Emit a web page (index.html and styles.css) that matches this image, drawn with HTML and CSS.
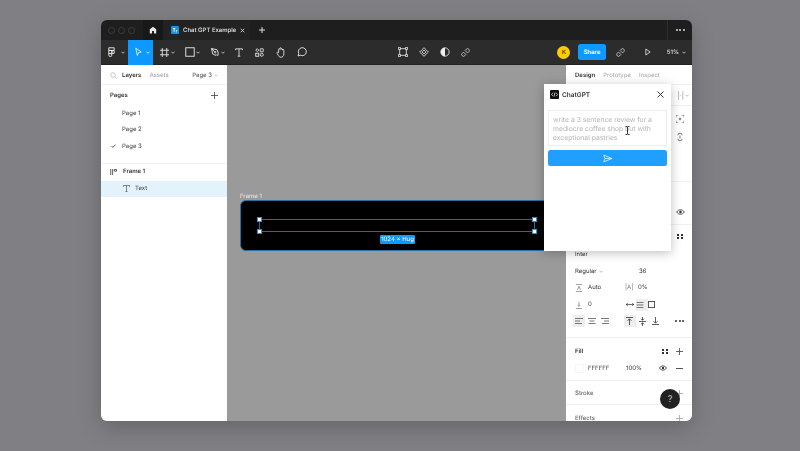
FILE: index.html
```html
<!DOCTYPE html>
<html lang="en">
<head>
    <meta charset="UTF-8">
    <meta name="viewport" content="width=device-width, initial-scale=1.0">
    <title>Chat GPT Example</title>
    <link rel="stylesheet" href="styles.css">
</head>
<body>
<div class="window">
    <div class="titlebar">
        <div class="traffic"><i></i><i></i><i></i></div>
        <div class="home">
            <svg width="8" height="8" viewBox="0 0 10 10"><path d="M5 .8 9 4.2V9.4H6.2V6.4H3.8V9.4H1V4.2Z" fill="#e8e8e8"/></svg>
        </div>
        <div class="file-tab">
            <span class="file-icon">
                <svg width="8" height="8" viewBox="0 0 9 9"><path d="M2 2.2H5V3.2H4V6.5H3V3.2H2ZM5.5 4.5H7.2V5.2H6.2V7.2H5.5Z" fill="#fff"/></svg>
            </span>
            <span class="file-name">Chat GPT Example</span>
            <svg class="file-close" width="5" height="5" viewBox="0 0 7 7"><path d="M1 1 6 6M6 1 1 6" stroke="#ddd" stroke-width="1.2"/></svg>
        </div>
        <svg class="new-tab" width="6" height="6" viewBox="0 0 7 7"><path d="M3.5 0V7M0 3.5H7" stroke="#ddd" stroke-width="1.2"/></svg>
        <div class="title-more"><i></i><i></i><i></i></div>
    </div>

    <div class="toolbar">
        <div class="tool tool-menu">
            <svg width="7" height="10" viewBox="0 0 9 13" fill="none" stroke="#e8e8e8" stroke-width="1.2"><path d="M1 1H8V4.5H1ZM1 4.5H5V8.5H1ZM1 8.5H3A2 2 0 1 1 1 10.5ZM5 6.5A1.6 1.6 0 1 0 8 6.5 1.6 1.6 0 1 0 5 6.5Z"/></svg>
            <svg class="caret" width="4" height="3" viewBox="0 0 5 3"><path d="M.5.5 2.5 2.5 4.5.5" fill="none" stroke="#ddd"/></svg>
        </div>
        <div class="tool tool-active">
            <svg width="7" height="10" viewBox="0 0 9 12"><path d="M1 1 8 6 4.6 6.8 3 10.5Z" fill="none" stroke="#fff" stroke-width="1"/></svg>
            <svg class="caret" width="4" height="3" viewBox="0 0 5 3"><path d="M.5.5 2.5 2.5 4.5.5" fill="none" stroke="#fff"/></svg>
        </div>
        <div class="tool">
            <svg width="9" height="9" viewBox="0 0 12 12"><path d="M3 0V12M9 0V12M0 3H12M0 9H12" stroke="#e8e8e8" stroke-width="1.2"/></svg>
            <svg class="caret" width="4" height="3" viewBox="0 0 5 3"><path d="M.5.5 2.5 2.5 4.5.5" fill="none" stroke="#ddd"/></svg>
        </div>
        <div class="tool">
            <svg width="10" height="10" viewBox="0 0 13 13"><rect x="1" y="1" width="11" height="11" fill="none" stroke="#e8e8e8" stroke-width="1.2"/></svg>
            <svg class="caret" width="4" height="3" viewBox="0 0 5 3"><path d="M.5.5 2.5 2.5 4.5.5" fill="none" stroke="#ddd"/></svg>
        </div>
        <div class="tool">
            <svg width="10" height="10" viewBox="0 0 13 13" fill="none" stroke="#e8e8e8" stroke-width="1.2"><path d="M2 2 9 3.5 11 8 8 11 3.5 9Z"/><path d="M2 2 6 6"/><circle cx="6.8" cy="6.8" r="1"/><path d="M9.5 11.5 11.5 9.5"/></svg>
            <svg class="caret" width="4" height="3" viewBox="0 0 5 3"><path d="M.5.5 2.5 2.5 4.5.5" fill="none" stroke="#ddd"/></svg>
        </div>
        <div class="tool tool-plain">
            <svg width="8" height="9" viewBox="0 0 12 13" fill="none" stroke="#e8e8e8" stroke-width="1.3"><path d="M1 3V1H11V3M6 1V12M4 12H8"/></svg>
        </div>
        <div class="tool tool-plain">
            <svg width="9" height="9" viewBox="0 0 12 12" fill="none" stroke="#e8e8e8" stroke-width="1.2"><path d="M3 .8 5 2.8 3 4.8 1 2.8Z"/><circle cx="9" cy="9" r="2"/><rect x="1" y="7" width="4" height="4"/><rect x="7" y="1" width="4" height="4" rx=".5"/></svg>
        </div>
        <div class="tool tool-plain">
            <svg width="10" height="11" viewBox="0 0 12 14" fill="none" stroke="#e8e8e8" stroke-width="1.1"><path d="M3 7V3A.8.8 0 0 1 4.6 3V1.8A.8.8 0 0 1 6.2 1.8V3A.8.8 0 0 1 7.8 3V4A.8.8 0 0 1 9.6 4V9C9.6 11.5 8 13 6 13S3.5 12.2 2.5 10.5L1 8A.9.9 0 0 1 2.5 7L3 7.6"/></svg>
        </div>
        <div class="tool tool-plain">
            <svg width="10" height="10" viewBox="0 0 12 12"><path d="M1.2 10.8 2.2 8A4.8 4.8 0 1 1 4 9.8Z" fill="none" stroke="#e8e8e8" stroke-width="1.1"/></svg>
        </div>

        <div class="toolbar-center">
            <svg width="10" height="10" viewBox="0 0 12 12" fill="none" stroke="#e8e8e8"><path d="M2 2H10V10H2Z"/><path d="M.5.5H3V3H.5ZM9 .5H11.5V3H9ZM.5 9H3V11.5H.5ZM9 9H11.5V11.5H9Z" fill="#2c2c2c"/></svg>
            <svg width="10" height="10" viewBox="0 0 12 12" fill="none" stroke="#e8e8e8"><path d="M6 .8 8 2.8 6 4.8 4 2.8ZM6 7.2 8 9.2 6 11.2 4 9.2ZM.8 6 2.8 4 4.8 6 2.8 8ZM7.2 6 9.2 4 11.2 6 9.2 8Z"/></svg>
            <svg width="10" height="10" viewBox="0 0 12 12"><circle cx="6" cy="6" r="5" fill="none" stroke="#eee"/><path d="M6 1A5 5 0 0 0 6 11Z" fill="#eee"/></svg>
            <svg width="9" height="9" viewBox="0 0 11 11" fill="none" stroke="#d8d8d8"><path d="M6.5 1.5A2 2 0 0 1 9.5 4.5L8 6 5 3ZM4.5 9.5A2 2 0 0 1 1.5 6.5L3 5 6 8Z"/></svg>
        </div>

        <div class="toolbar-right">
            <span class="avatar">K</span>
            <span class="share">Share</span>
            <svg class="link-icon" width="9" height="9" viewBox="0 0 11 11" fill="none" stroke="#d8d8d8"><path d="M6.5 1.5A2 2 0 0 1 9.5 4.5L8 6 5 3ZM4.5 9.5A2 2 0 0 1 1.5 6.5L3 5 6 8Z"/></svg>
            <svg class="play-icon" width="6" height="8" viewBox="0 0 7 9"><path d="M1 1 6 4.5 1 8Z" fill="none" stroke="#e0e0e0"/></svg>
            <span class="zoom-level">51%</span>
            <svg width="4" height="3" viewBox="0 0 5 3"><path d="M.5.5 2.5 2.5 4.5.5" fill="none" stroke="#ddd"/></svg>
        </div>
    </div>

    <div class="workspace">
        <aside class="left-panel">
            <div class="panel-tabs">
                <svg width="7" height="7" viewBox="0 0 7 7" fill="none" stroke="#bbb" stroke-width=".8"><circle cx="3" cy="3" r="2.3"/><path d="M4.8 4.8 6.8 6.8"/></svg>
                <span class="tab-on">Layers</span>
                <span class="tab-off">Assets</span>
                <span class="page-pick">Page 3</span>
                <svg width="4" height="3" viewBox="0 0 5 3"><path d="M.5 2.5 2.5.5 4.5 2.5" fill="none" stroke="#bbb"/></svg>
            </div>
            <div class="pages">
                <div class="pages-head">
                    <span>Pages</span>
                    <svg width="7" height="7" viewBox="0 0 7 7"><path d="M3.5 0V7M0 3.5H7" stroke="#555" stroke-width=".9"/></svg>
                </div>
                <div class="page-row">Page 1</div>
                <div class="page-row">Page 2</div>
                <div class="page-row">
                    <svg class="check" width="5" height="4" viewBox="0 0 6 5"><path d="M.5 2.5 2.2 4.2 5.5.8" fill="none" stroke="#333"/></svg>
                    Page 3
                </div>
            </div>
            <div class="layer-row layer-frame">
                <svg width="7" height="6" viewBox="0 0 8 7"><path d="M.8 0V7M3 0V7M5 .5H7.5V2.5H5Z" fill="none" stroke="#444"/></svg>
                <span>Frame 1</span>
            </div>
            <div class="layer-row layer-text">
                <svg width="7" height="7" viewBox="0 0 8 8"><path d="M.5 2V.5H7.5V2M4 .5V7.5M2.8 7.5H5.2" fill="none" stroke="#555" stroke-width=".8"/></svg>
                <span>Text</span>
            </div>
        </aside>

        <main class="canvas">
            <div class="frame-label">Frame 1</div>
            <div class="frame">
                <div class="text-box">
                    <i class="handle handle-tl"></i><i class="handle handle-tr"></i>
                    <i class="handle handle-bl"></i><i class="handle handle-br"></i>
                    <span class="size-tag">1024 × Hug</span>
                </div>
            </div>
        </main>

        <aside class="right-panel">
            <div class="panel-tabs design-tabs">
                <span class="tab-on">Design</span>
                <span class="tab-off">Prototype</span>
                <span class="tab-off">Inspect</span>
            </div>
            <div class="section section-align">
                <span class="mini-icons">|·|</span>
                <svg width="4" height="3" viewBox="0 0 5 3"><path d="M.5.5 2.5 2.5 4.5.5" fill="none" stroke="#aaa"/></svg>
            </div>
            <div class="section section-icons">
                <svg width="8" height="8" viewBox="0 0 9 9" fill="none" stroke="#555" stroke-width=".9"><path d="M0 2.5V0H2.5M6.5 0H9V2.5M9 6.5V9H6.5M2.5 9H0V6.5"/><circle cx="4.5" cy="4.5" r="1"/></svg>
                <svg width="6" height="10" viewBox="0 0 7 11" fill="none" stroke="#555" stroke-width=".9"><path d="M1 3.5A2.5 2.5 0 0 1 6 3.5M1 7.5A2.5 2.5 0 0 0 6 7.5M3.5 4V7"/></svg>
            </div>
            <div class="section section-hidden">
                <svg width="9" height="6" viewBox="0 0 10 7"><path d="M.5 3.5C3 0 7 0 9.5 3.5 7 7 3 7 .5 3.5Z" fill="none" stroke="#333"/><circle cx="5" cy="3.5" r="1.5" fill="#333"/></svg>
            </div>
            <div class="section section-type">
                <div class="row row-dots"><span class="dots-four"><i></i><i></i><i></i><i></i></span></div>
                <div class="row">Inter</div>
                <div class="row row-regular">
                    <span class="weight">Regular</span>
                    <svg width="4" height="3" viewBox="0 0 5 3"><path d="M.5.5 2.5 2.5 4.5.5" fill="none" stroke="#aaa"/></svg>
                    <span class="font-size">36</span>
                </div>
                <div class="row row-metrics">
                    <svg width="8" height="8" viewBox="0 0 9 9" fill="none" stroke="#777" stroke-width=".8"><path d="M1 .5H8M1 8.5H8M2.8 6.5 4.5 2.5 6.2 6.5"/></svg>
                    <span class="metric-a">Auto</span>
                    <span class="glyph-box">|A|</span>
                    <span>0%</span>
                </div>
                <div class="row row-metrics">
                    <svg width="8" height="8" viewBox="0 0 9 9" fill="none" stroke="#777" stroke-width=".8"><path d="M1 8.5H8M4.5 1V6M3 4.5 4.5 6 6 4.5"/></svg>
                    <span class="metric-a">0</span>
                    <svg class="resize-h" width="8" height="5" viewBox="0 0 9 5" fill="none" stroke="#333" stroke-width=".8"><path d="M0 2.5H9M2 .8.4 2.5 2 4.2M7 .8 8.6 2.5 7 4.2"/></svg>
                    <span class="icon-btn icon-btn-on">
                        <svg width="8" height="6" viewBox="0 0 8 7"><path d="M0 .5H8M0 3.5H8M0 6.5H8" stroke="#333" stroke-width=".8"/></svg>
                    </span>
                    <span class="icon-btn">
                        <svg width="7" height="7" viewBox="0 0 8 8"><rect x=".5" y=".5" width="7" height="7" fill="none" stroke="#444"/></svg>
                    </span>
                </div>
                <div class="row row-align">
                    <span class="icon-btn icon-btn-on"><svg width="8" height="6" viewBox="0 0 8 6"><path d="M0 .5H8M0 3H5M0 5.5H7" stroke="#555" stroke-width=".8"/></svg></span>
                    <span class="icon-btn"><svg width="8" height="6" viewBox="0 0 8 6"><path d="M0 .5H8M1.5 3H6.5M.5 5.5H7.5" stroke="#555" stroke-width=".8"/></svg></span>
                    <span class="icon-btn"><svg width="8" height="6" viewBox="0 0 8 6"><path d="M0 .5H8M3 3H8M1 5.5H8" stroke="#555" stroke-width=".8"/></svg></span>
                    <span class="icon-gap"></span>
                    <span class="icon-btn icon-btn-on"><svg width="7" height="8" viewBox="0 0 7 8" fill="none" stroke="#333" stroke-width=".8"><path d="M0 .5H7M3.5 8V2M1.5 3.8 3.5 1.8 5.5 3.8"/></svg></span>
                    <span class="icon-btn"><svg width="7" height="9" viewBox="0 0 7 9" fill="none" stroke="#333" stroke-width=".8"><path d="M0 4.5H7M3.5 0V3M3.5 6V9M2 1.8 3.5 3.3 5 1.8M2 7.2 3.5 5.7 5 7.2"/></svg></span>
                    <span class="icon-btn"><svg width="7" height="8" viewBox="0 0 7 8" fill="none" stroke="#333" stroke-width=".8"><path d="M0 7.5H7M3.5 0V6M1.5 4.2 3.5 6.2 5.5 4.2"/></svg></span>
                    <span class="more-dots"><i></i><i></i><i></i></span>
                </div>
            </div>
            <div class="section section-fill">
                <div class="row row-head">
                    <b>Fill</b>
                    <span class="dots-four"><i></i><i></i><i></i><i></i></span>
                    <svg width="7" height="7" viewBox="0 0 7 7"><path d="M3.5 0V7M0 3.5H7" stroke="#555" stroke-width=".9"/></svg>
                </div>
                <div class="row row-color">
                    <span class="swatch"></span>
                    <span class="hex">FFFFFF</span>
                    <span class="opacity">100%</span>
                    <svg width="8" height="6" viewBox="0 0 10 7"><path d="M.5 3.5C3 0 7 0 9.5 3.5 7 7 3 7 .5 3.5Z" fill="none" stroke="#333"/><circle cx="5" cy="3.5" r="1.5" fill="#333"/></svg>
                    <svg width="7" height="1" viewBox="0 0 7 1"><path d="M0 .5H7" stroke="#555"/></svg>
                </div>
            </div>
            <div class="section section-plain">
                <span>Stroke</span>
                <svg width="7" height="7" viewBox="0 0 7 7"><path d="M3.5 0V7M0 3.5H7" stroke="#aaa" stroke-width=".9"/></svg>
            </div>
            <div class="section section-plain section-last">
                <span>Effects</span>
                <svg width="7" height="7" viewBox="0 0 7 7"><path d="M3.5 0V7M0 3.5H7" stroke="#aaa" stroke-width=".9"/></svg>
            </div>
        </aside>

        <div class="plugin">
            <div class="plugin-head">
                <span class="plugin-logo">
                    <svg width="7" height="5" viewBox="0 0 7 5" fill="none" stroke="#fff" stroke-width=".7"><path d="M2 .8 .5 2.5 2 4.2M5 .8 6.5 2.5 5 4.2M4 .5 3 4.5"/></svg>
                </span>
                <span class="plugin-title">ChatGPT</span>
                <svg width="7" height="7" viewBox="0 0 7 7"><path d="M.5.5 6.5 6.5M6.5.5 .5 6.5" stroke="#222" stroke-width=".9"/></svg>
            </div>
            <div class="prompt">write a 3 sentence review for a mediocre coffee shop but with exceptional pastries</div>
            <div class="send">
                <svg width="10" height="9" viewBox="0 0 11 9"><path d="M.8.8 10 4.5.8 8.2 2.2 4.5ZM2.2 4.5H10" fill="none" stroke="#dff1ff" stroke-width=".9"/></svg>
            </div>
            <svg class="ibeam" width="5" height="9" viewBox="0 0 5 9"><path d="M.5.5H2L2.5 1 3 .5H4.5M2.5 1V8M.5 8.5H2L2.5 8 3 8.5H4.5" fill="none" stroke="#222" stroke-width=".9"/></svg>
        </div>

        <div class="help">?</div>
    </div>
</div>
</body>
</html>
```

FILE: styles.css
```css
* {
    box-sizing: border-box;
}
html, body {
    height: 100%;
}
body {
    margin: 0;
    padding: 20px 108px 30px 101px;
    overflow: hidden;
    background: #808084;
    font-family: Inter, "Liberation Sans", sans-serif;
    font-size: 6px;
    text-rendering: geometricPrecision;
    color: #333;
}
svg {
    display: block;
    flex: none;
}
.window {
    height: 401px;
    display: flex;
    flex-direction: column;
    border-radius: 6px;
    overflow: hidden;
    box-shadow: 0 6px 22px rgba(0, 0, 0, .22);
    filter: blur(.25px);
}

/* title bar */
.titlebar {
    height: 20px;
    display: flex;
    align-items: center;
    background: #1e1e1e;
    color: #e6e6e6;
}
.traffic {
    width: 42px;
    display: flex;
    gap: 3px;
    padding-left: 7px;
}
.traffic i {
    width: 7px;
    height: 7px;
    border: 1px solid #3c3c3c;
    border-radius: 50%;
}
.home {
    width: 20px;
    height: 20px;
    display: flex;
    align-items: center;
    justify-content: center;
    background: #181818;
}
.file-tab {
    width: 87px;
    height: 20px;
    display: flex;
    align-items: center;
    padding-left: 8px;
    background: #222;
}
.file-icon {
    width: 8px;
    height: 8px;
    margin-right: 4px;
    border-radius: 1px;
    background: #1492e6;
    overflow: hidden;
}
.file-name {
    width: 57px;
    font-weight: 500;
    white-space: nowrap;
}
.new-tab {
    margin-left: 9px;
}
.title-more {
    margin-left: auto;
    width: 25px;
    height: 20px;
    display: flex;
    align-items: center;
    justify-content: center;
    gap: 1.5px;
    border-left: 1px solid #2c2c2c;
}
.title-more i, .more-dots i {
    width: 2px;
    height: 2px;
    border-radius: 50%;
    background: #ddd;
}

/* tool bar */
.toolbar {
    height: 25px;
    display: flex;
    align-items: center;
    position: relative;
    background: #2c2c2c;
    border-bottom: 1px solid #222;
}
.tool {
    width: 25px;
    height: 25px;
    display: flex;
    align-items: center;
    justify-content: space-between;
    padding: 0 3px 0 7px;
}
.tool-menu {
    width: 27px;
}
.tool-active {
    background: #0d99ff;
}
.tool-plain {
    width: 21px;
    padding: 0;
    justify-content: center;
}
.toolbar-center {
    display: flex;
    align-items: center;
    gap: 11px;
    margin-left: 86px;
}
.toolbar-right {
    margin-left: auto;
    display: flex;
    align-items: center;
    padding-right: 6px;
    color: #e6e6e6;
}
.avatar {
    width: 13px;
    height: 13px;
    display: flex;
    align-items: center;
    justify-content: center;
    border-radius: 50%;
    background: #fc0;
    color: #444;
    font-weight: 600;
}
.share {
    width: 28px;
    height: 16px;
    margin-left: 7.5px;
    display: flex;
    align-items: center;
    justify-content: center;
    border-radius: 2.5px;
    background: #0d99ff;
    color: #fff;
    font-weight: 600;
}
.link-icon {
    margin-left: 10.5px;
}
.play-icon {
    margin-left: 19.5px;
}
.zoom-level {
    margin-left: 16px;
    margin-right: 3px;
    font-weight: 500;
}

/* panels */
.workspace {
    flex: 1;
    min-height: 0;
    display: grid;
    grid-template-columns: 126px 1fr 126px;
    position: relative;
}
.left-panel, .right-panel {
    background: #fff;
    overflow: hidden;
}
.panel-tabs {
    height: 20px;
    display: flex;
    align-items: center;
    padding-left: 9px;
    padding-top: 1px;
    border-bottom: 1px solid #f0f0f0;
    white-space: nowrap;
}
.tab-on {
    margin-left: 5px;
    font-weight: 600;
    color: #333;
}
.tab-off {
    margin-left: 8px;
    color: #aaa;
    font-weight: 500;
}
.page-pick {
    margin-left: auto;
    margin-right: 2px;
    color: #555;
}
.panel-tabs > svg:last-child {
    margin-right: 9px;
}
.pages {
    padding-bottom: 8px;
    border-bottom: 1px solid #f0f0f0;
}
.pages-head {
    height: 20px;
    display: flex;
    align-items: center;
    justify-content: space-between;
    padding: 1px 9px 0;
    font-weight: 600;
}
.page-row {
    height: 16.5px;
    display: flex;
    align-items: center;
    padding-left: 21px;
    position: relative;
    color: #444;
}
.check {
    position: absolute;
    left: 10px;
    top: 6px;
}
.layer-row {
    height: 16px;
    display: flex;
    align-items: center;
    gap: 5px;
}
.layer-frame {
    padding-left: 9px;
    font-weight: 600;
    margin-bottom: 1px;
}
.layer-frame svg {
    margin-right: 1px;
}
.layer-text {
    padding-left: 22px;
    background: #e3f3fc;
    color: #444;
}

/* canvas */
.canvas {
    position: relative;
    overflow: hidden;
    background: #9a9a9a;
}
.frame-label {
    position: absolute;
    left: 13px;
    top: 128px;
    color: #e8e8e8;
}
.frame {
    position: absolute;
    left: 13px;
    top: 135px;
    width: 360px;
    height: 51px;
    border: 1px solid #2a6f9e;
    border-radius: 6px;
    background: #000;
}
.text-box {
    position: absolute;
    left: 18px;
    top: 18px;
    width: 276px;
    height: 13px;
    border: 1px solid #1670b0;
}
.handle {
    position: absolute;
    width: 5px;
    height: 5px;
    border: 1px solid #0d99ff;
    background: #fff;
}
.handle-tl { left: -3px; top: -3px; }
.handle-tr { right: -3px; top: -3px; }
.handle-bl { left: -3px; bottom: -3px; }
.handle-br { right: -3px; bottom: -3px; }
.size-tag {
    position: absolute;
    left: 120px;
    top: 15px;
    width: 35px;
    height: 9px;
    display: flex;
    align-items: center;
    justify-content: center;
    border-radius: 1px;
    background: #0d99ff;
    color: #fff;
    white-space: nowrap;
}

/* right panel */
.design-tabs {
    padding-left: 4px;
}
.design-tabs .tab-off {
    margin-left: 8px;
    font-weight: 400;
}
.section {
    border-bottom: 1px solid #f0f0f0;
    padding: 0 9px;
}
.section-align {
    height: 21px;
    display: flex;
    align-items: center;
    justify-content: flex-end;
    gap: 1px;
    padding-right: 3px;
}
.mini-icons {
    color: #888;
    font-size: 7px;
}
.section-icons {
    height: 76px;
    display: flex;
    flex-direction: column;
    align-items: flex-end;
    gap: 9px;
    padding-top: 9px;
    padding-right: 8px;
}
.section-icons svg:last-child {
    margin-right: 1px;
}
.section-hidden {
    height: 43px;
    display: flex;
    align-items: center;
    justify-content: flex-end;
    padding-top: 17px;
    padding-right: 7px;
}
.section-type {
    height: 113px;
    padding-top: 3px;
}
.row {
    height: 16.7px;
    display: flex;
    align-items: center;
}
.row-dots {
    justify-content: flex-end;
    margin-bottom: 1.5px;
}
.dots-four {
    width: 6px;
    display: grid;
    grid-template-columns: 2px 2px;
    gap: 1.5px 2px;
}
.dots-four i {
    width: 2px;
    height: 2px;
    background: #333;
}
.weight {
    width: 24px;
}
.font-size {
    margin-left: 36px;
}
.row-metrics svg:first-child {
    margin-right: 5px;
}
.metric-a {
    width: 37px;
}
.glyph-box {
    width: 13px;
    color: #777;
}
.resize-h {
    margin-left: 1px;
    margin-right: 2px;
}
.icon-btn {
    width: 12px;
    height: 12px;
    display: flex;
    align-items: center;
    justify-content: center;
}
.icon-btn-on {
    background: #eee;
}
.row-align {
    gap: 1px;
    margin-left: -2px;
}
.icon-gap {
    width: 10.5px;
}
.more-dots {
    margin-left: auto;
    margin-right: -1px;
    display: flex;
    gap: 1.5px;
}
.more-dots i {
    background: #333;
}
.section-fill {
    height: 43px;
    padding-top: 5px;
}
.row-head {
    gap: 8px;
}
.row-head b {
    flex: 1;
    font-weight: 600;
}
.swatch {
    width: 9px;
    height: 9px;
    margin-right: 4px;
    border: 1px solid #f6f6f6;
    background: #fff;
}
.hex {
    width: 38px;
}
.opacity {
    width: 33px;
}
.row-color svg:last-child {
    margin-left: 9px;
}
.section-plain {
    height: 24px;
    padding-top: 1px;
    display: flex;
    align-items: center;
    justify-content: space-between;
    color: #666;
    font-weight: 500;
}
.section-last {
    border-bottom: 0;
    padding-top: 2px;
}

/* plugin window */
.plugin {
    position: absolute;
    left: 443px;
    top: 19px;
    width: 127px;
    height: 167px;
    padding: 0 4px;
    background: #fff;
    box-shadow: 0 2px 10px rgba(0, 0, 0, .25);
}
.plugin-head {
    height: 21px;
    margin: 0 -4px;
    padding: 0 7px 0 6px;
    display: flex;
    align-items: center;
}
.plugin-logo {
    width: 9px;
    height: 9px;
    display: flex;
    align-items: center;
    justify-content: center;
    margin-right: 3px;
    border-radius: 1px;
    background: #111;
}
.plugin-title {
    flex: 1;
    font-weight: 600;
    font-size: 6.5px;
}
.prompt {
    height: 36px;
    margin-top: 5px;
    padding: 3.5px 4px;
    border: 1px solid #eee;
    color: #b5b5b5;
    font-size: 6.8px;
    line-height: 9px;
}
.send {
    height: 16px;
    margin-top: 4px;
    display: flex;
    align-items: center;
    justify-content: center;
    border-radius: 2.5px;
    background: #1f9fff;
}
.ibeam {
    position: absolute;
    left: 81px;
    top: 42px;
}
.help {
    position: absolute;
    left: 559px;
    top: 324px;
    width: 20px;
    height: 20px;
    display: flex;
    align-items: center;
    justify-content: center;
    border-radius: 50%;
    background: #222;
    color: #ccc;
    font-size: 9px;
}
```
